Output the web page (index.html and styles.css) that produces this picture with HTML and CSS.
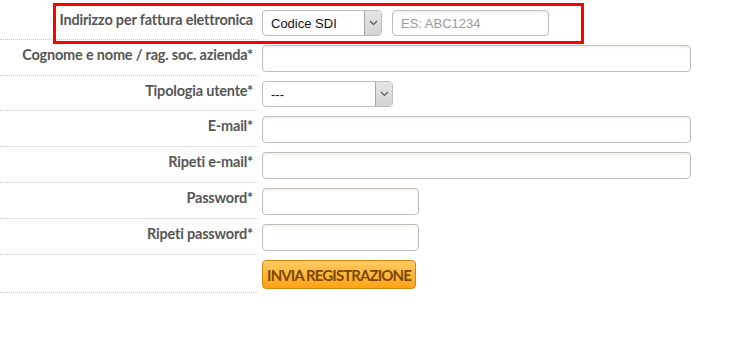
FILE: index.html
```html
<!DOCTYPE html>
<html lang="it">
<head>
    <meta charset="UTF-8">
    <meta name="viewport" content="width=device-width, initial-scale=1.0">
    <title>Registrazione</title>
    <link rel="stylesheet" href="styles.css">
</head>
<body>
    <form class="reg-form" action="#" method="post">
        <!-- Highlight box round the first row -->
        <div class="highlight"></div>

        <div class="form-row">
            <label class="form-label" for="sdi-type">Indirizzo per fattura elettronica</label>
            <div class="form-field">
                <div class="select select-sdi">
                    <select id="sdi-type">
                        <option>Codice SDI</option>
                        <option>PEC</option>
                    </select>
                    <span class="select-arrow">
                        <svg width="9" height="6" viewBox="0 0 9 6"><path d="M1 1 L4.5 4.5 L8 1" fill="none" stroke="#555" stroke-width="1.1"/></svg>
                    </span>
                </div>
                <input type="text" class="input input-sdi" placeholder="ES: ABC1234">
            </div>
        </div>

        <div class="form-row">
            <label class="form-label" for="nome">Cognome e nome / rag. soc. azienda*</label>
            <div class="form-field">
                <input type="text" id="nome" class="input input-long">
            </div>
        </div>

        <div class="form-row">
            <label class="form-label" for="tipologia">Tipologia utente*</label>
            <div class="form-field">
                <div class="select select-type">
                    <select id="tipologia">
                        <option>---</option>
                        <option>Privato</option>
                        <option>Azienda</option>
                    </select>
                    <span class="select-arrow">
                        <svg width="9" height="6" viewBox="0 0 9 6"><path d="M1 1 L4.5 4.5 L8 1" fill="none" stroke="#555" stroke-width="1.1"/></svg>
                    </span>
                </div>
            </div>
        </div>

        <div class="form-row">
            <label class="form-label" for="email">E-mail*</label>
            <div class="form-field">
                <input type="text" id="email" class="input input-long">
            </div>
        </div>

        <div class="form-row">
            <label class="form-label" for="email2">Ripeti e-mail*</label>
            <div class="form-field">
                <input type="text" id="email2" class="input input-long">
            </div>
        </div>

        <div class="form-row">
            <label class="form-label" for="pwd">Password*</label>
            <div class="form-field">
                <input type="password" id="pwd" class="input input-short">
            </div>
        </div>

        <div class="form-row">
            <label class="form-label" for="pwd2">Ripeti password*</label>
            <div class="form-field">
                <input type="password" id="pwd2" class="input input-short">
            </div>
        </div>

        <div class="form-row">
            <div class="form-label"></div>
            <div class="form-field">
                <button type="submit" class="submit-button">INVIA REGISTRAZIONE</button>
            </div>
        </div>
    </form>
</body>
</html>
```

FILE: styles.css
```css
:root {
    --label-color: #565656;
    --border-color: #bdbdbd;
    --dots-color: #c8c8c8;
    --red: #f00;
}

* {
    margin: 0;
    padding: 0;
    box-sizing: border-box;
}

body {
    background: #fff;
    font-family: 'Lato', 'Liberation Sans', sans-serif;
}

.reg-form {
    position: relative;
    padding-top: 5px;
}

/* Red frame drawn over the first row */
.highlight {
    position: absolute;
    left: 53px;
    top: 3px;
    width: 531px;
    height: 41px;
    border: 3px solid var(--red);
    pointer-events: none;
}

.form-row {
    display: flex;
}

.form-label {
    width: 258px;
    flex-shrink: 0;
    padding: 6px 5px 3px 0;
    border-bottom: 1px dotted var(--dots-color);
    color: var(--label-color);
    font-size: 14.5px;
    font-weight: 700;
    line-height: 18px;
    text-align: right;
    letter-spacing: -0.2px;
}

.form-field {
    display: flex;
    align-items: flex-start;
    margin-left: 4px;
    padding: 5px 0 4px;
}

.form-row:first-child .form-field {
    padding-top: 6px;
}

.input {
    height: 27px;
    border: 1px solid var(--border-color);
    border-radius: 4px;
    background: #fff;
    box-shadow: inset 0 2px 2px #fdf1eb;
    padding: 0 8px;
    font-family: 'Liberation Sans', sans-serif;
    font-size: 13px;
    color: #222;
    outline: none;
}

.input::placeholder {
    color: #9a9a9a;
}

.input-long {
    width: 429px;
}

.input-short {
    width: 157px;
}

.input-sdi {
    width: 157px;
    height: 26px;
    margin-left: 10px;
}

.select {
    display: flex;
    height: 26px;
    border: 1px solid var(--border-color);
    border-radius: 4px;
    background: #fff;
    overflow: hidden;
}

.select select {
    flex: 1;
    min-width: 0;
    border: none;
    background: transparent;
    appearance: none;
    -webkit-appearance: none;
    padding: 0 8px;
    font-family: 'Liberation Sans', sans-serif;
    font-size: 13px;
    color: #111;
    outline: none;
}

.select-sdi {
    width: 120px;
}

.select-type {
    width: 131px;
}

.select-arrow {
    width: 17px;
    display: flex;
    align-items: center;
    justify-content: center;
    background: linear-gradient(#e6e6e6, #d4d4d4);
    border-left: 1px solid #a9a9a9;
}

.submit-button {
    width: 154px;
    height: 29px;
    padding: 0;
    border: 1px solid #d4860c;
    border-radius: 4px;
    background: linear-gradient(#ffcb62, #ffa214);
    color: #7a4800;
    font-family: 'Lato', sans-serif;
    font-size: 15px;
    font-weight: 700;
    letter-spacing: -0.9px;
    cursor: pointer;
}
```
